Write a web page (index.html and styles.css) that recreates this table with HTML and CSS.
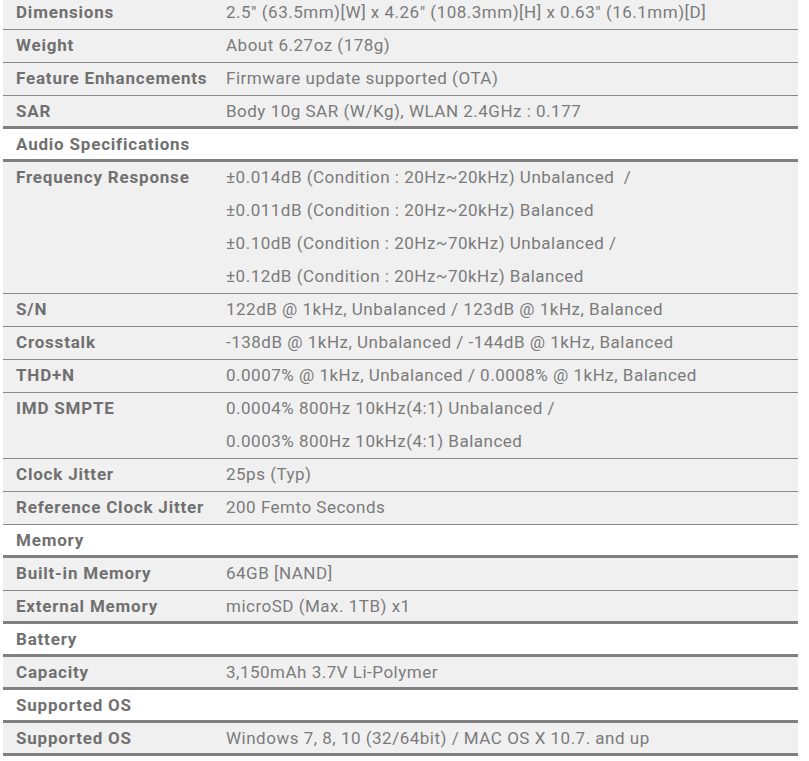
FILE: index.html
```html
<!DOCTYPE html>
<html lang="en">
<head>
<meta charset="utf-8">
<title>Specifications</title>
<link rel="stylesheet" href="styles.css">
</head>
<body>
<div class="specs">
  <div class="row"><div class="label">Dimensions</div><div class="value">2.5" (63.5mm)[W] x 4.26" (108.3mm)[H] x 0.63" (16.1mm)[D]</div></div>
  <div class="row"><div class="label">Weight</div><div class="value">About 6.27oz (178g)</div></div>
  <div class="row"><div class="label">Feature Enhancements</div><div class="value">Firmware update supported (OTA)</div></div>
  <div class="row thick"><div class="label">SAR</div><div class="value">Body 10g SAR (W/Kg), WLAN 2.4GHz : 0.177</div></div>
  <div class="row section thick"><div class="label">Audio Specifications</div></div>
  <div class="row multi"><div class="label">Frequency Response</div><div class="value"><div>±0.014dB (Condition : 20Hz~20kHz) Unbalanced &nbsp;/</div><div>±0.011dB (Condition : 20Hz~20kHz) Balanced</div><div>±0.10dB (Condition : 20Hz~70kHz) Unbalanced /</div><div>±0.12dB (Condition : 20Hz~70kHz) Balanced</div></div></div>
  <div class="row"><div class="label">S/N</div><div class="value">122dB @ 1kHz, Unbalanced / 123dB @ 1kHz, Balanced</div></div>
  <div class="row"><div class="label">Crosstalk</div><div class="value">-138dB @ 1kHz, Unbalanced / -144dB @ 1kHz, Balanced</div></div>
  <div class="row"><div class="label">THD+N</div><div class="value">0.0007% @ 1kHz, Unbalanced / 0.0008% @ 1kHz, Balanced</div></div>
  <div class="row multi"><div class="label">IMD SMPTE</div><div class="value"><div>0.0004% 800Hz 10kHz(4:1) Unbalanced /</div><div>0.0003% 800Hz 10kHz(4:1) Balanced</div></div></div>
  <div class="row"><div class="label">Clock Jitter</div><div class="value">25ps (Typ)</div></div>
  <div class="row"><div class="label">Reference Clock Jitter</div><div class="value">200 Femto Seconds</div></div>
  <div class="row section thick"><div class="label">Memory</div></div>
  <div class="row"><div class="label">Built-in Memory</div><div class="value">64GB [NAND]</div></div>
  <div class="row thick"><div class="label">External Memory</div><div class="value">microSD (Max. 1TB) x1</div></div>
  <div class="row section thick"><div class="label">Battery</div></div>
  <div class="row thick"><div class="label">Capacity</div><div class="value">3,150mAh 3.7V Li-Polymer</div></div>
  <div class="row section thick"><div class="label">Supported OS</div></div>
  <div class="row thick"><div class="label">Supported OS</div><div class="value">Windows 7, 8, 10 (32/64bit) / MAC OS X 10.7. and up</div></div>
</div>
</body>
</html>
```

FILE: styles.css
```css
html, body {
  margin: 0;
  padding: 0;
  background: #ffffff;
}

body {
  font-family: Roboto, "Liberation Sans", sans-serif;
  font-size: 17px;
  color: #7b7b7b;
}

.specs {
  width: 795px;
  margin: -3px 0 0 3px;
}

.row {
  display: grid;
  grid-template-columns: 210px 1fr;
  background: #f0f0f0;
  border-bottom: 1px solid #8a8a8a;
  line-height: 31px;
  padding-bottom: 1px;
}

.row.thick {
  border-bottom: 3px solid #808080;
  line-height: 30px;
  padding-bottom: 0;
}

.row.section {
  background: #ffffff;
}

.row.multi {
  line-height: 31px;
}

.label {
  padding-left: 13px;
  font-weight: 700;
  color: #707070;
  white-space: nowrap;
  letter-spacing: 0.8px;
}

.section .label {
  grid-column: 1 / 3;
}

.value {
  padding-left: 13px;
  white-space: nowrap;
  letter-spacing: 0.5px;
}

.multi .value > div {
  padding-bottom: 2px;
}

.multi .value > div:last-child {
  padding-bottom: 0;
}
```
